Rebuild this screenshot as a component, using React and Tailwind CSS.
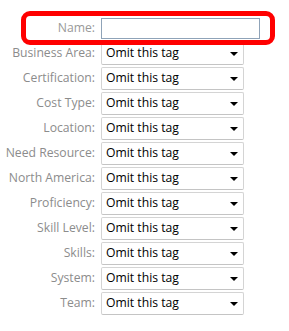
const tags = [
  "Business Area",
  "Certification",
  "Cost Type",
  "Location",
  "Need Resource",
  "North America",
  "Proficiency",
  "Skill Level",
  "Skills",
  "System",
  "Team",
];

const TagRow = ({ label }) => {
  return (
    <div className="flex items-center h-[23px]">
      <label className="w-[95px] text-right text-[#8c8c8c] whitespace-nowrap">
        {label}:
      </label>
      <div className="ml-[6px] w-[143px] h-[23px] flex items-center justify-between pl-[4px] pr-[5px] bg-white border border-[#d4d4d4] border-b-[#c4c4c4] rounded-[2px] text-black">
        <span>Omit this tag</span>
        <span className="w-0 h-0 border-l-[4px] border-r-[4px] border-t-[4px] border-l-transparent border-r-transparent border-t-black" />
      </div>
    </div>
  );
};

export default function App() {
  return (
    <div className="w-[289px] h-[331px] bg-white pt-[18px] font-['Open_Sans','Noto_Sans',sans-serif] text-[12.2px]">
      <div className="relative flex items-center h-[21px]">
        <div className="absolute left-[21px] top-[-7px] w-[254px] h-[34px] border-[5px] border-[#ff0000] rounded-[9px] z-10" />
        <label className="w-[95px] text-right text-[#999]">Name:</label>
        <input
          type="text"
          className="ml-[6px] w-[159px] h-[21px] border border-[#8fa3b8] bg-white outline-none"
        />
      </div>
      <div className="mt-[3px] flex flex-col gap-[2px]">
        {tags.map((t) => (
          <TagRow label={t} key={t} />
        ))}
      </div>
    </div>
  );
}
